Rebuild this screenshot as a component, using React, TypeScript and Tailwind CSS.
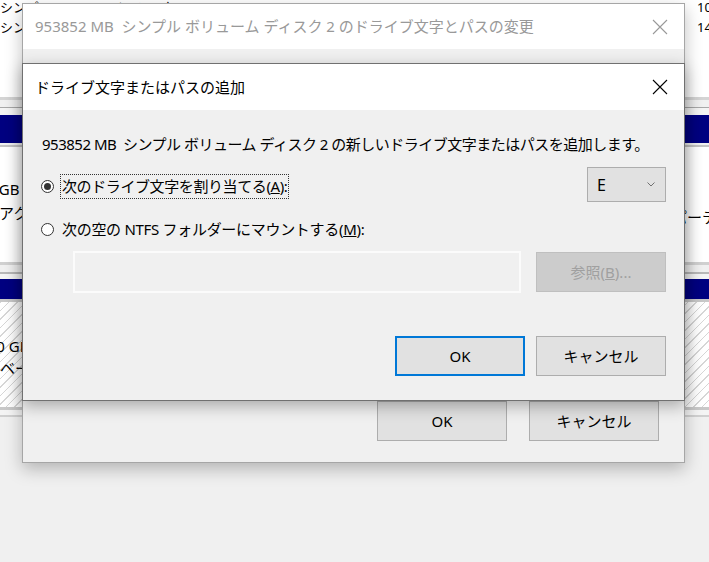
import React from "react";

const ui = "font-['Noto_Sans','Noto_Sans_CJK_JP',sans-serif]";

const CloseIcon = ({ className }: { className?: string }) => (
  <svg width="16" height="16" viewBox="0 0 16 16" className={className}>
    <path d="M1 1L15 15M15 1L1 15" stroke="currentColor" strokeWidth="1.1" fill="none" />
  </svg>
);

const Radio = ({ checked }: { checked?: boolean }) => (
  <span className="flex size-[13px] shrink-0 items-center justify-center rounded-full border border-[#333] bg-white">
    {checked && <span className="size-[7px] rounded-full bg-[#333]" />}
  </span>
);

const volumes = [
  { name: "シンプル", kind: "ベーシック", fs: "NTFS", status: "正常 (ブート)", cap: "931.50 GB", free: "931.50 GB", pct: "100 %" },
  { name: "シンプル", kind: "ベーシック", fs: "NTFS", status: "正常 (プライマリ)", cap: "931.50 GB", free: "131.20 GB", pct: "14 %" },
];

// disk management window sitting behind the dialogs
const DiskManager = () => (
  <div className="flex flex-col text-[13px] text-black">
    <div className="h-[97px] overflow-hidden bg-white">
      <div className="-mt-[3px]">
        {volumes.map((v, i) => (
          <div
            key={i}
            className="grid h-[20px] grid-cols-[110px_230px_80px_170px_107px_1fr] items-center whitespace-nowrap leading-[20px]"
          >
            <span>{v.name}</span>
            <span>{v.kind}</span>
            <span>{v.fs}</span>
            <span>{v.cap}</span>
            <span>{v.free}</span>
            <span>{v.pct}</span>
          </div>
        ))}
      </div>
    </div>
    <div className="h-[3px] bg-[#d4d4d4]" />
    <div className="h-[7px] bg-[#f0f0f0]" />
    <div className="h-[1px] bg-[#a8a8a8]" />
    <div className="h-[7px] bg-[#f4f4f4]" />

    {/* disk 0 */}
    <div className="h-[28px] bg-[#000080]" />
    <div className="h-[2px] bg-[#f0f0f0]" />
    <div className="h-[2px] bg-[#c4c4c4]" />
    <div className="flex h-[115px] overflow-hidden whitespace-nowrap bg-white text-[15px] leading-[24px]">
      <div className="w-[300px] pt-[30px]">
        <div className="-ml-[52px]">931.50 GB NTFS</div>
        <div className="-ml-[1px]">アクティブ, プライマリ</div>
      </div>
      <div className="ml-auto w-[37px] pt-[58px]">
        <div>パーティション</div>
      </div>
    </div>
    <div className="h-[3px] bg-[#d0d0d0]" />
    <div className="h-[7px] bg-[#f0f0f0]" />
    <div className="h-[2px] bg-[#b8b8b8]" />
    <div className="h-[5px] bg-[#f4f4f4]" />

    {/* disk 1 */}
    <div className="h-[20px] bg-[#000080]" />
    <div className="h-[3px] bg-[#c8c8c8]" />
    <div className="flex h-[105px] overflow-hidden whitespace-nowrap bg-[repeating-linear-gradient(135deg,#d6d6d6_0_1px,#ffffff_1px_6px)] text-[15px] leading-[22px]">
      <div className="w-[300px] pt-[33px]">
        <div className="-ml-[42px]">931.50 GB</div>
        <div>ベーシック</div>
      </div>
    </div>
    <div className="h-[3px] bg-[#c8c8c8]" />
    <div className="h-[5px] bg-[#f4f4f4]" />
    <div className="h-[2px] bg-[#d0d0d0]" />
  </div>
);

const BackDialog = () => (
  <div className="absolute left-[22px] top-[3px] flex h-[460px] w-[663px] flex-col border border-[#a6a6a6] bg-[#f0f0f0] shadow-[0_6px_16px_rgba(0,0,0,0.25)]">
    <div className="flex h-[45px] shrink-0 items-center justify-between bg-white pl-[12px] pr-[16px]">
      <span className="text-[15px] text-[#999]">953852 MB&nbsp; シンプル ボリューム ディスク 2 のドライブ文字とパスの変更</span>
      <CloseIcon className="text-[#999]" />
    </div>
    <div className="flex-1" />
    <div className="flex justify-end gap-[22px] pb-[21px] pr-[25px]">
      <button type="button" className="h-[40px] w-[130px] border border-[#adadad] bg-[#e1e1e1] text-[15px]">
        OK
      </button>
      <button type="button" className="h-[40px] w-[130px] border border-[#adadad] bg-[#e1e1e1] text-[15px]">
        キャンセル
      </button>
    </div>
  </div>
);

const FrontDialog = () => (
  <div className="absolute left-[22px] top-[63px] flex h-[338px] w-[663px] flex-col border border-[#707070] bg-[#f0f0f0] shadow-[0_5px_15px_rgba(0,0,0,0.3)]">
    <div className="flex h-[46px] shrink-0 items-center justify-between bg-white pl-[12px] pr-[16px]">
      <span className="text-[15px] text-black">ドライブ文字またはパスの追加</span>
      <CloseIcon className="text-black" />
    </div>

    <div className="px-[18px] pt-[24px] text-[15px] text-black">
      <p className="ml-[1px] h-[20px] whitespace-nowrap leading-[20px] tracking-[-0.5px]">
        953852 MB&nbsp; シンプル ボリューム ディスク 2 の新しいドライブ文字またはパスを追加します。
      </p>

      <div className="mt-[13px] flex h-[35px] items-center justify-between">
        <div className="flex items-center gap-[6px] pt-[3px]">
          <Radio checked />
          <span className="h-[25px] border border-dotted border-[#333] px-[1px] leading-[23px] tracking-[-0.4px]">
            次のドライブ文字を割り当てる(<span className="underline">A</span>):
          </span>
        </div>
        <div className="flex h-[35px] w-[79px] items-center justify-between border border-[#adadad] bg-[#e1e1e1] pl-[9px] pr-[10px]">
          <span className="text-[16px]">E</span>
          <svg width="8" height="5" viewBox="0 0 8 5">
            <path d="M0.5 0.5L4 4L7.5 0.5" stroke="#707070" fill="none" />
          </svg>
        </div>
      </div>

      <div className="mt-[15px] flex h-[24px] items-center gap-[8px]">
        <Radio />
        <span className="leading-[24px] tracking-[-0.3px]">
          次の空の NTFS フォルダーにマウントする(<span className="underline">M</span>):
        </span>
      </div>

      <div className="mt-[10px] flex">
        <div className="ml-[32px] h-[42px] w-[448px] border-2 border-[#fbfbfb] bg-[#f0f0f0]" />
        <button
          type="button"
          className="ml-auto mt-[1px] h-[40px] w-[130px] border border-[#bfbfbf] bg-[#cccccc] text-[#a0a0a0]"
        >
          参照(<span className="underline">B</span>)...
        </button>
      </div>

      <div className="mt-[43px] flex justify-end gap-[11px]">
        <button type="button" className="h-[40px] w-[130px] border-2 border-[#0078d7] bg-[#e1e1e1]">
          OK
        </button>
        <button type="button" className="h-[40px] w-[130px] border border-[#adadad] bg-[#e1e1e1]">
          キャンセル
        </button>
      </div>
    </div>
  </div>
);

export default function App() {
  return (
    <div className={`relative h-[562px] w-[709px] overflow-hidden bg-[#f0f0f0] ${ui}`}>
      <DiskManager />
      <BackDialog />
      <FrontDialog />
    </div>
  );
}
